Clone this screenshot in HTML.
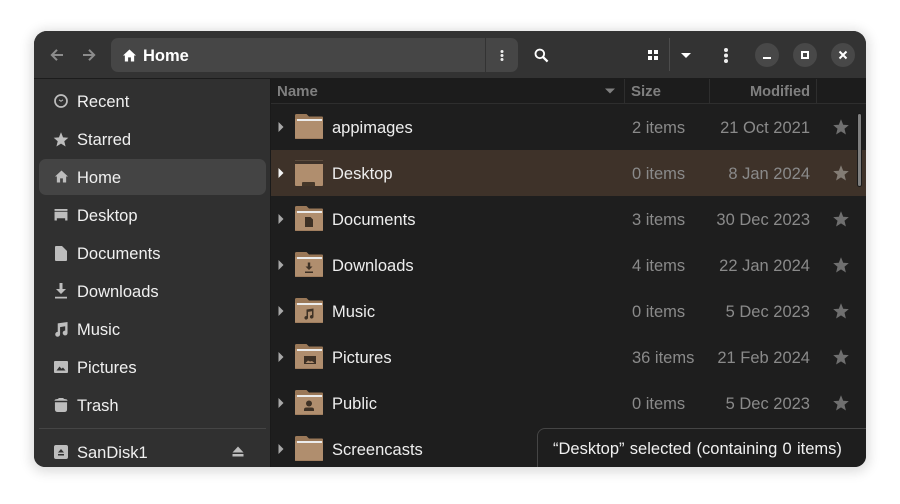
<!DOCTYPE html>
<html><head><meta charset="utf-8"><style>
html,body{margin:0;padding:0;background:#fff;width:900px;height:504px;overflow:hidden}
body{font-family:"Liberation Sans",sans-serif;position:relative}
.a{position:absolute}
.t{position:absolute;white-space:nowrap;line-height:20px;height:20px}
#win{left:34px;top:31px;width:832px;height:436px;border-radius:13px 13px 11px 11px;background:#1e1e1e;box-shadow:0 2px 12px 3px rgba(0,0,0,.14);overflow:hidden}
.side{color:#f0f0f0;font-size:16.5px;left:43px;margin-top:1px}
.name{color:#eee;font-size:16.5px;left:298px;margin-top:1px}
.size{color:#8a8a8a;font-size:16.5px;left:598px;margin-top:1px}
.mod{color:#8a8a8a;font-size:16.5px;right:56px;text-align:right;margin-top:1px}
svg{position:absolute;overflow:visible}
</style></head><body>
<div id="win" class="a">
<!-- header -->
<div class="a" style="left:0;top:0;width:832px;height:47px;background:#333"></div>
<div class="a" style="left:0;top:47px;width:832px;height:1px;background:#1c1c1c"></div>
<!-- sidebar -->
<div class="a" style="left:0;top:48px;width:236px;height:388px;background:#303030"></div>
<div class="a" style="left:236px;top:48px;width:1px;height:388px;background:#1a1a1a"></div>
<div class="a" style="left:5px;top:128px;width:227px;height:36px;border-radius:7px;background:#444"></div>
<div class="a" style="left:5px;top:397px;width:227px;height:1px;background:#454545"></div>
<!-- column header -->
<div class="a" style="left:237px;top:48px;width:595px;height:24px;background:#1c1c1c"></div>
<div class="a" style="left:237px;top:72px;width:595px;height:1px;background:#2e2e2e"></div>
<div class="a" style="left:590px;top:48px;width:1px;height:24px;background:#2e2e2e"></div>
<div class="a" style="left:675px;top:48px;width:1px;height:24px;background:#2e2e2e"></div>
<div class="a" style="left:782px;top:48px;width:1px;height:24px;background:#2e2e2e"></div>
<div class="t" style="left:243px;top:51px;font-size:15px;font-weight:bold;color:#7f7f7f">Name</div>
<div class="t" style="left:597px;top:51px;font-size:15px;font-weight:bold;color:#7f7f7f">Size</div>
<div class="t" style="right:56px;top:51px;font-size:14.6px;font-weight:bold;color:#7f7f7f">Modified</div>
<svg style="left:571px;top:57px" width="10" height="6"><path d="M0 0.500H10L5 5.500Z" fill="#7f7f7f"/></svg>
<!-- selected row -->
<div class="a" style="left:237px;top:119px;width:595px;height:46px;background:#3e3229"></div>

<!-- pathbar -->
<div class="a" style="left:77px;top:7px;width:407px;height:34px;border-radius:7px;background:#464646"></div>
<div class="a" style="left:451px;top:7px;width:1px;height:34px;background:#333"></div>
<div class="t" style="left:109px;top:15px;font-size:16.5px;font-weight:bold;color:#fff">Home</div>
<svg style="left:89px;top:18px" width="13" height="13" viewBox="0 0 14 14"><path d="M7 .5L14 7H12V13.500H8.500V9H5.500V13.500H2V7H0Z" fill="#fff"/></svg>
<!-- back / forward -->
<svg style="left:16px;top:17px" width="14" height="14" viewBox="0 0 14 14"><path d="M13 7H2M7 1.800L1.800 7L7 12.200" fill="none" stroke="#8c8c8c" stroke-width="2"/></svg>
<svg style="left:48px;top:17px" width="14" height="14" viewBox="0 0 14 14"><path d="M1 7H12M7 1.800L12.200 7L7 12.200" fill="none" stroke="#8c8c8c" stroke-width="2"/></svg>
<!-- path menu dots -->
<svg style="left:464px;top:18px" width="8" height="14"><circle cx="4" cy="2.500" r="1.500" fill="#eee"/><circle cx="4" cy="6.500" r="1.500" fill="#eee"/><circle cx="4" cy="10.500" r="1.500" fill="#eee"/></svg>
<!-- search -->
<svg style="left:500px;top:17px" width="15" height="15" viewBox="0 0 16 16"><circle cx="6.200" cy="6.200" r="4.600" fill="none" stroke="#fff" stroke-width="2"/><path d="M9.500 9.500L14.500 14.500" stroke="#fff" stroke-width="2.400"/></svg>
<!-- grid -->
<svg style="left:614px;top:19px" width="10" height="10"><path d="M0 0H4V4H0ZM6 0H10V4H6ZM0 6H4V10H0ZM6 6H10V10H6Z" fill="#fff"/></svg>
<div class="a" style="left:635px;top:7px;width:1px;height:33px;background:#4c4c4c"></div>
<svg style="left:647px;top:22px" width="10" height="6"><path d="M0 0H10L5 5Z" fill="#fff"/></svg>
<!-- kebab -->
<svg style="left:688px;top:16px" width="8" height="18"><circle cx="4" cy="3" r="2" fill="#eee"/><circle cx="4" cy="8.500" r="2" fill="#eee"/><circle cx="4" cy="14" r="2" fill="#eee"/></svg>
<!-- window buttons -->
<div class="a" style="left:721px;top:12px;width:24px;height:24px;border-radius:50%;background:#484848"></div>
<div class="a" style="left:759px;top:12px;width:24px;height:24px;border-radius:50%;background:#484848"></div>
<div class="a" style="left:797px;top:12px;width:24px;height:24px;border-radius:50%;background:#484848"></div>
<div class="a" style="left:729px;top:26px;width:8px;height:2px;background:#fff"></div>
<div class="a" style="left:767px;top:20px;width:4px;height:4px;border:2px solid #fff"></div>
<svg style="left:804px;top:19px" width="10" height="10"><path d="M1.500 1.500L8.500 8.500M8.500 1.500L1.500 8.500" stroke="#fff" stroke-width="2"/></svg>

<!-- sidebar items -->
<div class="t side" style="top:60px">Recent</div>
<div class="t side" style="top:98px">Starred</div>
<div class="t side" style="top:136px">Home</div>
<div class="t side" style="top:174px">Desktop</div>
<div class="t side" style="top:212px">Documents</div>
<div class="t side" style="top:250px">Downloads</div>
<div class="t side" style="top:288px">Music</div>
<div class="t side" style="top:326px">Pictures</div>
<div class="t side" style="top:364px">Trash</div>
<div class="t side" style="top:411px">SanDisk1</div>
<svg style="left:20px;top:63px" width="14" height="14" viewBox="0 0 14 14"><circle cx="7" cy="7" r="6" fill="none" stroke="#bdbdbd" stroke-width="1.700"/><path d="M5 5.800L7 7.300L9 5.800" fill="none" stroke="#bdbdbd" stroke-width="1"/></svg>
<svg style="left:19px;top:101px" width="16" height="15" viewBox="0 0 16 16"><path d="M8 .3L10.200 5.700L15.800 6.100L11.500 9.800L12.900 15.500L8 12.400L3.100 15.500L4.500 9.800L.2 6.100L5.800 5.700Z" fill="#bdbdbd"/></svg>
<svg style="left:21px;top:139px" width="13" height="13" viewBox="0 0 14 14"><path d="M7 .5L14 7H12V13.500H8.500V9H5.500V13.500H2V7H0Z" fill="#bdbdbd"/></svg>
<svg style="left:20px;top:178px" width="14" height="12" viewBox="0 0 14 13"><path d="M0 0H14V2H0ZM0 3H14V12.500H11.500V10H2.500V12.500H0Z" fill="#bdbdbd"/></svg>
<svg style="left:21px;top:215px" width="12" height="15" viewBox="0 0 12 15"><path d="M0 1Q0 0 1 0H7L12 5V14Q12 15 11 15H1Q0 15 0 14Z" fill="#bdbdbd"/></svg>
<svg style="left:21px;top:252px" width="12" height="16" viewBox="0 0 12 16"><path d="M4.500 0H7.500V6H11L6 11L1 6H4.500ZM0 13.800H12V15.500H0Z" fill="#bdbdbd"/></svg>
<svg style="left:20px;top:291px" width="14" height="14" viewBox="0 0 14 15"><path d="M3.500 1.500L14 0V11.500A2.600 2.600 0 1 1 11.500 9.200V4.500L6 5.500V13A2.600 2.600 0 1 1 3.500 10.600Z" fill="#bdbdbd"/></svg>
<svg style="left:20px;top:330px" width="14" height="12" viewBox="0 0 14 12"><path fill-rule="evenodd" d="M0 1Q0 0 1 0H13Q14 0 14 1V11Q14 12 13 12H1Q0 12 0 11ZM2.500 9.500H11.500L9 6.500L7.500 7.800L5.500 5.500Z" fill="#bdbdbd"/></svg>
<svg style="left:20px;top:367px" width="14" height="14" viewBox="0 0 14 15"><path d="M4 1Q4 0 5 0H9Q10 0 10 1L13 1.500Q14 2 14 3H0Q0 2 1 1.500ZM.5 4.500H13.500V12Q13.500 15 10.500 15H3.500Q.5 15 .5 12Z" fill="#bdbdbd"/></svg>
<svg style="left:20px;top:414px" width="14" height="14" viewBox="0 0 14 14"><path fill-rule="evenodd" d="M2 0H12Q14 0 14 2V12Q14 14 12 14H2Q0 14 0 12V2Q0 0 2 0ZM7 4L4 7.500H10ZM4 9V10.500H10V9Z" fill="#bdbdbd"/></svg>
<svg style="left:198px;top:415px" width="12" height="12" viewBox="0 0 12 12"><path d="M6 .5L11.500 6.500H.5ZM.5 8H11.500V10.500H.5Z" fill="#bdbdbd"/></svg>

<!-- rows -->
<svg width="0" height="0" style="position:absolute">
<defs>
<symbol id="fold" viewBox="0 0 28 26" overflow="visible">
<path d="M0 1.500Q0 0 1.500 0H11.500L14 2.500H27Q28 2.500 28 3.500V7H0Z" fill="#9a7858"/>
<path d="M0 5H28V24Q28 25 27 25H1Q0 25 0 24Z" fill="#b08e6e"/>
<rect y="24.500" width="28" height=".5" fill="#8f6e50"/>
<rect x="2" y="5" width="25" height="2" fill="#ececec"/>
</symbol>
<symbol id="star" viewBox="0 0 16 16" overflow="visible"><path d="M8 .3L10.200 5.700L15.800 6.100L11.500 9.800L12.900 15.500L8 12.400L3.100 15.500L4.500 9.800L.2 6.100L5.800 5.700Z" fill="#6f6f6f"/></symbol>
<symbol id="arr" viewBox="0 0 6 10" overflow="visible"><path d="M0.500 0L5.500 5L0.500 10Z"/></symbol>
</defs>
</svg>

<!-- appimages -->
<svg style="left:244px;top:91px" width="6" height="10" fill="#a8a8a8"><use href="#arr"/></svg>
<svg style="left:261px;top:83px" width="28" height="26"><use href="#fold"/></svg>
<div class="t name" style="top:86px">appimages</div><div class="t size" style="top:86px">2 items</div><div class="t mod" style="top:86px">21 Oct 2021</div>
<svg style="left:799px;top:88px" width="16" height="16"><use href="#star"/></svg>

<!-- Desktop -->
<svg style="left:244px;top:137px" width="6" height="10" fill="#f4f4f4"><use href="#arr"/></svg>
<svg style="left:261px;top:129px" width="28" height="26" viewBox="0 0 28 26"><rect x="0" y="0" width="28" height="1" fill="#5c4c3e"/><path d="M0 4H28V25Q28 26 27 26H1Q0 26 0 25Z" fill="#b08e6e"/><path d="M7 26V23Q7 22 8 22H19Q20 22 20 23V26Z" fill="#453729"/></svg>
<div class="t name" style="top:132px">Desktop</div><div class="t size" style="top:132px">0 items</div><div class="t mod" style="top:132px">8 Jan 2024</div>
<svg style="left:799px;top:134px" width="16" height="16"><path d="M8 .3L10.200 5.700L15.800 6.100L11.500 9.800L12.900 15.500L8 12.400L3.100 15.500L4.500 9.800L.2 6.100L5.800 5.700Z" fill="#837c74"/></svg>

<!-- Documents -->
<svg style="left:244px;top:183px" width="6" height="10" fill="#a8a8a8"><use href="#arr"/></svg>
<svg style="left:261px;top:175px" width="28" height="26"><use href="#fold"/><path d="M10 11H15.500L18 13.500V21H10Z" fill="#3e3125"/></svg>
<div class="t name" style="top:178px">Documents</div><div class="t size" style="top:178px">3 items</div><div class="t mod" style="top:178px">30 Dec 2023</div>
<svg style="left:799px;top:180px" width="16" height="16"><use href="#star"/></svg>

<!-- Downloads -->
<svg style="left:244px;top:229px" width="6" height="10" fill="#a8a8a8"><use href="#arr"/></svg>
<svg style="left:261px;top:221px" width="28" height="26"><use href="#fold"/><path d="M12.800 10.500H15.200V14.500H17.500L14 18L10.500 14.500H12.800ZM10 19.500H18V21H10Z" fill="#3e3125"/></svg>
<div class="t name" style="top:224px">Downloads</div><div class="t size" style="top:224px">4 items</div><div class="t mod" style="top:224px">22 Jan 2024</div>
<svg style="left:799px;top:226px" width="16" height="16"><use href="#star"/></svg>

<!-- Music -->
<svg style="left:244px;top:275px" width="6" height="10" fill="#a8a8a8"><use href="#arr"/></svg>
<svg style="left:261px;top:267px" width="28" height="26"><use href="#fold"/><path d="M11.500 11.500L18.500 10.500V18.700A1.800 1.800 0 1 1 17 17V13.200L13 13.900V19.700A1.800 1.800 0 1 1 11.500 18Z" fill="#3e3125"/></svg>
<div class="t name" style="top:270px">Music</div><div class="t size" style="top:270px">0 items</div><div class="t mod" style="top:270px">5 Dec 2023</div>
<svg style="left:799px;top:272px" width="16" height="16"><use href="#star"/></svg>

<!-- Pictures -->
<svg style="left:244px;top:321px" width="6" height="10" fill="#a8a8a8"><use href="#arr"/></svg>
<svg style="left:261px;top:313px" width="28" height="26"><use href="#fold"/><path fill-rule="evenodd" d="M9 12H21V20H9ZM10.500 19H19.500L17 17L15 17.500L13 16.500Z" fill="#3e3125"/></svg>
<div class="t name" style="top:316px">Pictures</div><div class="t size" style="top:316px">36 items</div><div class="t mod" style="top:316px">21 Feb 2024</div>
<svg style="left:799px;top:318px" width="16" height="16"><use href="#star"/></svg>

<!-- Public -->
<svg style="left:244px;top:367px" width="6" height="10" fill="#a8a8a8"><use href="#arr"/></svg>
<svg style="left:261px;top:359px" width="28" height="26"><use href="#fold"/><circle cx="14" cy="13.500" r="3" fill="#3e3125"/><path d="M9 21V19.500Q9 17.500 11.500 17.500H16.500Q19 17.500 19 19.500V21Z" fill="#3e3125"/></svg>
<div class="t name" style="top:362px">Public</div><div class="t size" style="top:362px">0 items</div><div class="t mod" style="top:362px">5 Dec 2023</div>
<svg style="left:799px;top:364px" width="16" height="16"><use href="#star"/></svg>

<!-- Screencasts -->
<svg style="left:244px;top:413px" width="6" height="10" fill="#a8a8a8"><use href="#arr"/></svg>
<svg style="left:261px;top:405px" width="28" height="26"><use href="#fold"/></svg>
<div class="t name" style="top:408px">Screencasts</div>

<!-- scrollbar -->
<div class="a" style="left:824px;top:83px;width:3px;height:72px;border-radius:2px;background:#7f7f7f;box-shadow:0 0 0 1px #1a1a1a"></div>

<!-- status overlay -->
<div class="a" style="left:503px;top:397px;width:340px;height:50px;background:#1e1e1e;border:1px solid #454545;border-radius:8px 0 0 0;box-sizing:border-box"></div>
<div class="t" style="left:519px;top:408px;font-size:16.5px;word-spacing:.7px;color:#f0f0f0">“Desktop” selected (containing 0 items)</div>
</div>
</body></html>
